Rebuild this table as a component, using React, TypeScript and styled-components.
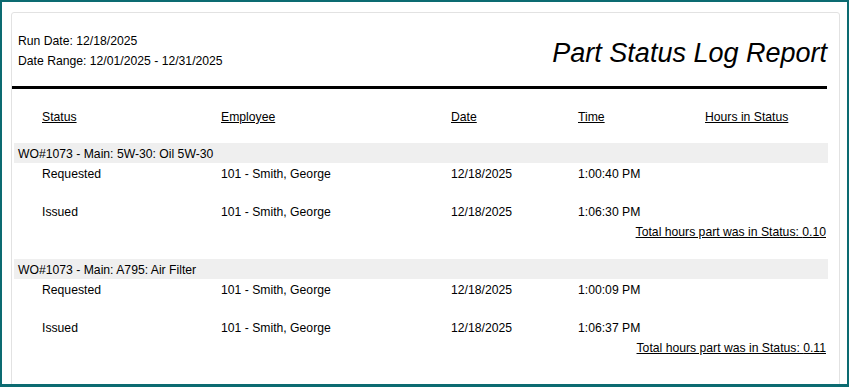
import React from "react";
import styled, { createGlobalStyle } from "styled-components";

const GlobalStyle = createGlobalStyle`
  html, body {
    margin: 0;
    padding: 0;
    background: #ffffff;
  }
  body {
    font-family: "Liberation Sans", Arial, sans-serif;
    color: #000;
  }
`;

type Entry = {
  status: string;
  employee: string;
  date: string;
  time: string;
};

type Part = {
  title: string;
  entries: Entry[];
  total: string;
};

const parts: Part[] = [
  {
    title: "WO#1073 - Main: 5W-30: Oil 5W-30",
    entries: [
      { status: "Requested", employee: "101 - Smith, George", date: "12/18/2025", time: "1:00:40 PM" },
      { status: "Issued", employee: "101 - Smith, George", date: "12/18/2025", time: "1:06:30 PM" },
    ],
    total: "0.10",
  },
  {
    title: "WO#1073 - Main: A795: Air Filter",
    entries: [
      { status: "Requested", employee: "101 - Smith, George", date: "12/18/2025", time: "1:00:09 PM" },
      { status: "Issued", employee: "101 - Smith, George", date: "12/18/2025", time: "1:06:37 PM" },
    ],
    total: "0.11",
  },
];

const App = () => {
  return (
    <Frame>
      <GlobalStyle />
      <Card>
        <Header>
          <Meta>
            <div>Run Date: 12/18/2025</div>
            <div>Date Range: 12/01/2025 - 12/31/2025</div>
          </Meta>
          <Title>Part Status Log Report</Title>
        </Header>
        <Rule />
        <Columns>
          <ColHead>Status</ColHead>
          <ColHead>Employee</ColHead>
          <ColHead>Date</ColHead>
          <ColHead>Time</ColHead>
          <ColHead>Hours in Status</ColHead>
        </Columns>
        {parts.map((p) => (
          <Group key={p.title}>
            <Band>{p.title}</Band>
            <Entries>
              {p.entries.map((e) => (
                <EntryRow key={e.status + e.time}>
                  <span>{e.status}</span>
                  <span>{e.employee}</span>
                  <span>{e.date}</span>
                  <span>{e.time}</span>
                  <span />
                </EntryRow>
              ))}
            </Entries>
            <Total>Total hours part was in Status: {p.total}</Total>
          </Group>
        ))}
      </Card>
    </Frame>
  );
};

export default App;

const Frame = styled.div`
  box-sizing: border-box;
  width: 849px;
  height: 387px;
  border: 2px solid #0c6b71;
  border-bottom-width: 3px;
  padding: 10px 7px 0 9px;
  overflow: hidden;
  background: #ffffff;
`;

const Card = styled.div`
  box-sizing: border-box;
  min-height: 420px;
  border: 1px solid #e2e2e2;
  border-radius: 3px;
  padding: 0 12px 0 0;
  font-size: 12.2px;
`;

const Header = styled.div`
  display: flex;
  justify-content: space-between;
  align-items: flex-start;
  padding: 18px 0 0 6px;
`;

const Meta = styled.div`
  line-height: 20px;
`;

const Title = styled.div`
  margin-top: 6px;
  font-size: 27px;
  line-height: 32px;
  font-style: italic;
`;

const Rule = styled.div`
  margin-top: 15px;
  height: 3px;
  background: #000;
`;

const grid = `
  display: grid;
  grid-template-columns: 179px 230px 127px 127px 1fr;
  padding-left: 30px;
`;

const Columns = styled.div`
  ${grid}
  margin-top: 21px;
  line-height: 14px;
`;

const ColHead = styled.span`
  text-decoration: underline;
`;

const Group = styled.div`
  margin: 19px 0 0 2px;
  padding-bottom: 1px;
`;

const Band = styled.div`
  box-sizing: border-box;
  height: 20px;
  line-height: 20px;
  padding: 1px 0 0 4px;
  background: #efefef;
  margin-right: -1px;
`;

const Entries = styled.div`
  display: flex;
  flex-direction: column;
  gap: 14px;
`;

const EntryRow = styled.div`
  ${grid}
  padding-left: 28px;
  height: 24px;
  line-height: 14px;
  padding-top: 4px;
  box-sizing: border-box;
`;

const Total = styled.div`
  text-align: right;
  line-height: 14px;
  text-decoration: underline;
  padding-right: 1px;
`;
